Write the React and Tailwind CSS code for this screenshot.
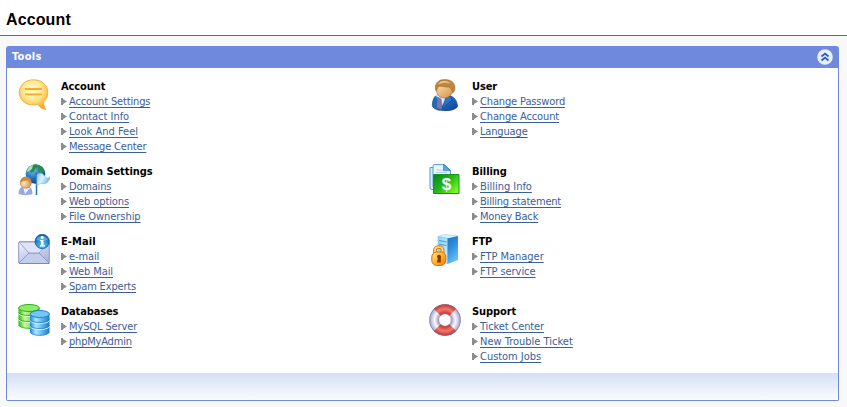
import React from "react";

function AccountIcon() {
  return (
    <svg width="32" height="32" viewBox="0 0 32 32">
      <defs>
        <radialGradient id="bubble" cx=".46" cy=".35" r=".65">
          <stop offset="0" stopColor="#fffcd8" />
          <stop offset=".5" stopColor="#ffe992" />
          <stop offset="1" stopColor="#fda92c" />
        </radialGradient>
      </defs>
      <path d="M15.500 .8C7.300 .8 1.300 6.200 1.300 13.500S7.300 26 15.500 26c1.700 0 3-.2 4.300-.6 1.500 2.600 4.500 4.700 8.100 5-1.700-2-2.500-4.600-2.300-7.500 2.700-2.400 4.200-5.600 4.200-9.400C29.800 6.200 23.700.8 15.500.8Z" fill="url(#bubble)" stroke="#f3ae48" />
      <path d="M7 10h17M7 15.500h17" stroke="#fda92b" strokeWidth="2" />
      <path d="M7 11.500h17M7 17h17" stroke="#fff3a8" strokeWidth="1" />
    </svg>
  );
}

function DomainIcon() {
  return (
    <svg width="32" height="32" viewBox="0 0 32 32">
      <defs>
        <radialGradient id="globe" cx=".35" cy=".3" r=".8">
          <stop offset="0" stopColor="#75bbe8" />
          <stop offset=".5" stopColor="#2775c4" />
          <stop offset="1" stopColor="#092d80" />
        </radialGradient>
        <linearGradient id="flag" x2="1" y2=".5">
          <stop offset="0" stopColor="#8dc6ee" />
          <stop offset=".5" stopColor="#dcf3ff" />
          <stop offset="1" stopColor="#68b5e6" />
        </linearGradient>
        <radialGradient id="face" cx=".35" cy=".55" r=".65">
          <stop offset="0" stopColor="#ffe6bb" />
          <stop offset="1" stopColor="#cf9149" />
        </radialGradient>
      </defs>
      <circle cx="17.500" cy="10" r="9.800" fill="url(#globe)" />
      <path d="M11 4c2-2.500 5-3.700 8-3.700l1 2.500-3 2-1 3-3 1Zm9-3 4 2 3 5-4 1-3-4Z" fill="#258f4a" />
      <path d="M9 8c0-3 3-6 6-7l-1 4-3 2Z" fill="#a9e6b5" />
      <path d="M18.500 9v22" stroke="#2b70a8" strokeWidth="1.500" />
      <path d="M19 10.500c4-2.500 6-1 8 2 1.500 2 3 2 5 .5-1 4.500-3 6.500-6 6.500-3 .5-4-1-7 2.500Z" fill="url(#flag)" stroke="#80bce2" strokeWidth=".7" />
      <path d="M.5 30c0-5 2.500-8 7-8s7 2 7 8c-4 1.500-10 1.500-14 0Z" fill="#9ba8dc" />
      <path d="m5 23 2 7 5-6Z" fill="#eaf0ff" />
      <circle cx="7.800" cy="18.800" r="5.500" fill="url(#face)" stroke="#bd803f" strokeWidth=".6" />
      <path d="M2.200 18.500c0-4 3-6 6-5.800 3 .2 5.700 2.500 5.200 6.800-2-1-2-3-4-3-3 0-4 .3-7.200 2Z" fill="#c78b46" />
    </svg>
  );
}

function MailIcon() {
  return (
    <svg width="32" height="32" viewBox="0 0 32 32">
      <defs>
        <linearGradient id="envelope" x2=".7" y2="1">
          <stop offset="0" stopColor="#f3f5ff" />
          <stop offset="1" stopColor="#a8b5df" />
        </linearGradient>
        <radialGradient id="info" cx=".5" cy=".75" r=".7">
          <stop offset="0" stopColor="#55ccf5" />
          <stop offset="1" stopColor="#0960ae" />
        </radialGradient>
      </defs>
      <rect x=".7" y="7.700" width="30.600" height="21.600" rx="1" fill="url(#envelope)" stroke="#8f97c4" />
      <path d="m1 29 10-10h10l10 10" fill="#c3cdec" stroke="#8791b8" strokeWidth=".8" />
      <path d="m1 8 10 11h10L31 8Z" fill="#dce3fa" stroke="#8f97bd" strokeWidth=".8" />
      <path d="M1 29.500h30.500" stroke="#7d88b5" />
      <circle cx="24.200" cy="7.500" r="7.200" fill="url(#info)" stroke="#07549a" strokeWidth=".7" />
      <path d="M18.500 5.500c2-5 9-5 11 0-3 2-7 2-11 0Z" fill="#78bee7" opacity=".65" />
      <path d="M22 6h3.500v5H27v1.500h-5V11h1V7.300h-1Z" fill="white" />
      <circle cx="24.200" cy="3.500" r="1.500" fill="white" />
    </svg>
  );
}

function DatabaseIcon() {
  return (
    <svg width="32" height="32" viewBox="0 0 32 32">
      <defs>
        <linearGradient id="greenDisk">
          <stop offset="0" stopColor="#32b51b" />
          <stop offset=".3" stopColor="#c3ff95" />
          <stop offset="1" stopColor="#26aa18" />
        </linearGradient>
        <linearGradient id="blueDisk">
          <stop offset="0" stopColor="#1b86dc" />
          <stop offset=".3" stopColor="#a9e8ff" />
          <stop offset="1" stopColor="#137bd2" />
        </linearGradient>
      </defs>
      <path d="M.5 4v17c1 4.500 20 4.500 21 0V4" fill="url(#greenDisk)" />
      <path d="M.5 9.500c2 4 19 4 21 0M.5 15.500c2 4 19 4 21 0" fill="none" stroke="#e5ffd9" strokeWidth="1" />
      <path d="M.5 8.500c2 4 19 4 21 0M.5 14.500c2 4 19 4 21 0M.5 21c2 4.500 19 4.500 21 0" fill="none" stroke="#28a51d" strokeWidth=".8" />
      <ellipse cx="11" cy="4" rx="10.400" ry="3.500" fill="#8fec68" stroke="#2fb020" />
      <path d="M12 10v18c1 4.500 18.500 4.500 19.500 0V10" fill="url(#blueDisk)" />
      <path d="M12 16.500c2 4 17.500 4 19.500 0M12 22.500c2 4 17.500 4 19.500 0" fill="none" stroke="#d7f5ff" strokeWidth="1" />
      <path d="M12 15.500c2 4 17.500 4 19.500 0M12 21.500c2 4 17.500 4 19.500 0M12 28c2 4.500 17.500 4.500 19.500 0" fill="none" stroke="#237fc7" strokeWidth=".8" />
      <ellipse cx="21.800" cy="10" rx="9.600" ry="3.500" fill="#75c6f4" stroke="#1d85d4" />
    </svg>
  );
}

function UserIcon() {
  return (
    <svg width="32" height="32" viewBox="0 0 32 32">
      <defs>
        <linearGradient id="suit" x2="1" y2="1">
          <stop offset="0" stopColor="#0a70cf" />
          <stop offset=".5" stopColor="#2068bd" />
          <stop offset="1" stopColor="#163c88" />
        </linearGradient>
        <linearGradient id="skin" x2="1" y2="1">
          <stop offset="0" stopColor="#ffe1ad" />
          <stop offset="1" stopColor="#d08d49" />
        </linearGradient>
      </defs>
      <path d="M3.300 27c0-6 2-10.500 6-11.300l11 1c5 1 8 5 8.300 11-4 5.500-22 6-25.300-.7Z" fill="url(#suit)" stroke="#15518e" strokeWidth=".7" />
      <path d="m7 16 4 14 7-11-5-3Z" fill="#dfe5fb" />
      <path d="m8.500 18 3.500 2 1.500 10c-2 1-5 0-6-2Z" fill="#777aa9" stroke="#565987" strokeWidth=".5" />
      <path d="m17 18 5-1 1 4-10 9Z" fill="#2b74c7" stroke="#0b4595" strokeWidth=".6" />
      <path d="M7 6c4-2 15-2 18 2-.5 6-4.500 11-9.500 11C10 19 7.200 15 7 9Z" fill="url(#skin)" stroke="#a3652a" strokeWidth=".6" />
      <path d="M6.400 8.500C6.500 3.500 10 .4 15.500 .4c6.500 0 10.500 3.500 10.500 8.100 0 3-1 4.500-2.500 5.500-.5-3-1.500-5-4-6-4 .5-8-2-10.500 0L7.500 12c-.9-1-1.100-2.500-1.100-3.500Z" fill="#bd8640" stroke="#9a6229" strokeWidth=".5" />
      <path d="M9 5.500c2-4.500 9-4.500 13-1-4-1-9-1-13 1Z" fill="#efca86" />
    </svg>
  );
}

function BillingIcon() {
  return (
    <svg width="32" height="32" viewBox="0 0 32 32">
      <defs>
        <linearGradient id="money" x2="1" y2=".8">
          <stop offset="0" stopColor="#078416" />
          <stop offset=".5" stopColor="#22b51c" />
          <stop offset="1" stopColor="#7cff25" />
        </linearGradient>
      </defs>
      <path d="M1 3.500h13v22H3a2 2 0 0 1-2-2Z" fill="#d9efff" stroke="#5599d8" />
      <path d="M5 .6h10.500l6 6V24H6a2 2 0 0 1-2-2V2.600a2 2 0 0 1 1-2Z" fill="#e7f6ff" stroke="#5b9ad0" />
      <path d="M14.500 .6v6h7Z" fill="#5da3de" stroke="#3d7db9" strokeWidth=".7" />
      <path d="M7 6h7M7 8.500h11" stroke="#b2d4ef" />
      <path d="M4.500 10.500h25.500v19H4.500Z" fill="url(#money)" stroke="#15961b" />
      <text x="17.500" y="26" textAnchor="middle" className="fill-white font-['Liberation_Sans'] text-[17px] font-bold">$</text>
    </svg>
  );
}

function FtpIcon() {
  return (
    <svg width="32" height="32" viewBox="0 0 32 32">
      <defs>
        <linearGradient id="server" y2=".5">
          <stop offset="0" stopColor="#8ed4ff" />
          <stop offset="1" stopColor="#bde7ff" />
        </linearGradient>
        <linearGradient id="serverSide" x2=".4" y2="1">
          <stop offset="0" stopColor="#1672c6" />
          <stop offset=".5" stopColor="#328fdc" />
          <stop offset="1" stopColor="#61c0f7" />
        </linearGradient>
        <linearGradient id="lock" x2="1" y2="1">
          <stop offset="0" stopColor="#fff19a" />
          <stop offset=".5" stopColor="#ffb42e" />
          <stop offset="1" stopColor="#ee7900" />
        </linearGradient>
      </defs>
      <path d="m9 2.500 7-2.200 13 1.700-10 3Z" fill="#d6f1ff" stroke="#a7d4ef" strokeWidth=".6" />
      <path d="m9 2.500 10 2v25L9 27Z" fill="url(#server)" stroke="#76bce9" strokeWidth=".6" />
      <path d="m18.500 4.500 10.500-2.500V26l-10.500 4Z" fill="url(#serverSide)" />
      <path d="m10 6.500 7.500 1.500M10 10l7.500 1.500" stroke="#429ddd" strokeWidth="1.200" />
      <path d="M6 20v-3.500c0-4.500 7.500-4.500 7.500 0V20" fill="none" stroke="#d87400" strokeWidth="3.800" />
      <path d="M6 20v-3.500c0-4.500 7.500-4.500 7.500 0V20" fill="none" stroke="#ffdc86" strokeWidth="1.900" />
      <rect x="2.800" y="18" width="14" height="13.500" rx="5" fill="url(#lock)" stroke="#dc7000" />
      <circle cx="10" cy="22.800" r="2" fill="#8e3500" />
      <path d="m9.500 22.500-1.700 6h4v-6Z" fill="#8e3500" />
    </svg>
  );
}

function SupportIcon() {
  return (
    <svg width="32" height="32" viewBox="0 0 32 32">
      <defs>
        <radialGradient id="ring" gradientUnits="userSpaceOnUse" cx="16" cy="16" r="16">
          <stop offset=".35" stopColor="#858bbd" />
          <stop offset=".65" stopColor="#fafaff" />
          <stop offset="1" stopColor="#959cc9" />
        </radialGradient>
        <radialGradient id="redBand" gradientUnits="userSpaceOnUse" cx="16" cy="16" r="16">
          <stop offset=".35" stopColor="#b02e28" />
          <stop offset=".68" stopColor="#f9766a" />
          <stop offset="1" stopColor="#b53535" />
        </radialGradient>
      </defs>
      <circle cx="16" cy="16" r="11" fill="none" stroke="url(#ring)" strokeWidth="9.500" />
      <path d="M4.900 4.900A15.800 15.800 0 0 1 27.100 4.900L20.400 11.700A6.200 6.200 0 0 0 11.600 11.700ZM4.900 27.100A15.800 15.800 0 0 0 27.100 27.100L20.400 20.300A6.200 6.200 0 0 1 11.600 20.300Z" fill="url(#redBand)" />
      <circle cx="16" cy="16" r="15.500" fill="none" stroke="#8e6289" strokeWidth=".5" />
      <circle cx="16" cy="16" r="6.200" fill="none" stroke="#b57e93" strokeWidth=".5" />
    </svg>
  );
}

const columns = [
  [
    {
      title: "Account", spacing: "tracking-[-0.1px]", Icon: AccountIcon,
      links: [
        ["Account Settings", "tracking-[-0.15px]"],
        ["Contact Info", "tracking-[-0.02px]"],
        ["Look And Feel", "tracking-[0.02px]"],
        ["Message Center", "tracking-[-0.18px]"],
      ],
    },
    {
      title: "Domain Settings", spacing: "tracking-[-0.07px]", Icon: DomainIcon,
      links: [
        ["Domains", "tracking-[-0.2px]"],
        ["Web options", "tracking-[-0.1px]"],
        ["File Ownership", "tracking-[-0.06px]"],
      ],
    },
    {
      title: "E-Mail", spacing: "tracking-[0.1px]", Icon: MailIcon,
      links: [
        ["e-mail", "tracking-[-0.1px]"],
        ["Web Mail", "tracking-[-0.1px]"],
        ["Spam Experts", "tracking-[-0.16px]"],
      ],
    },
    {
      title: "Databases", spacing: "tracking-[-0.14px]", Icon: DatabaseIcon,
      links: [
        ["MySQL Server", "tracking-[-0.12px]"],
        ["phpMyAdmin", "tracking-[-0.2px]"],
      ],
    },
  ],
  [
    {
      title: "User", spacing: "tracking-[-0.1px]", Icon: UserIcon,
      links: [
        ["Change Password", "tracking-[-0.14px]"],
        ["Change Account", "tracking-[-0.14px]"],
        ["Language", "tracking-[-0.16px]"],
      ],
    },
    {
      title: "Billing", spacing: "tracking-[-0.05px]", Icon: BillingIcon,
      links: [
        ["Billing Info", "tracking-[-0.03px]"],
        ["Billing statement", "tracking-[-0.2px]"],
        ["Money Back", "tracking-[-0.18px]"],
      ],
    },
    {
      title: "FTP", spacing: "tracking-[-0.2px]", Icon: FtpIcon,
      links: [
        ["FTP Manager", "tracking-[-0.03px]"],
        ["FTP service", "tracking-[-0.05px]"],
      ],
    },
    {
      title: "Support", spacing: "tracking-[-0.1px]", Icon: SupportIcon,
      links: [
        ["Ticket Center", "tracking-[-0.13px]"],
        ["New Trouble Ticket", "tracking-[0px]"],
        ["Custom Jobs", "tracking-[-0.03px]"],
      ],
    },
  ],
];

function ToolGroup({ title, spacing, Icon, links }) {
  return (
    <section className="flex items-start gap-[11px]">
      <div className="h-8 w-8 shrink-0"><Icon /></div>
      <div>
        <h3 className={`h-[15px] font-bold text-black ${spacing}`}>{title}</h3>
        <ul>
          {links.map(([link, tracking]) => (
            <li key={link} className="flex h-[15px] items-center">
              <svg className="mr-[2px] shrink-0" width="6" height="7" viewBox="0 0 6 7">
                <path d="M0 0h2v1l4 2.500L2 6v1H0Z" fill="#8c8c8c" />
              </svg>
              <a href="#" className={`whitespace-nowrap text-[#3a6098] underline decoration-1 underline-offset-[2px] ${tracking}`}>{link}</a>
            </li>
          ))}
        </ul>
      </div>
    </section>
  );
}

export default function App() {
  return (
    <div className="h-[407px] w-[847px] overflow-hidden bg-[#f8f8f8] font-['DejaVu_Sans_Condensed','DejaVu_Sans',sans-serif] text-[11px] leading-[15px]">
      <header className="h-9 border-b border-[#776761] bg-white pl-[6px] pt-[9px]">
        <h1 className="font-['Liberation_Sans',sans-serif] text-base font-bold leading-[21px] tracking-[0.12px] text-black">Account</h1>
      </header>
      <main className="ml-[6px] mt-[10px] w-[833px]">
        <div className="flex h-[22px] items-center justify-between rounded-t-[3px] bg-[#6f8add] pl-[6px] pr-[6px]">
          <h2 className="pb-[2px] font-bold tracking-[0.3px] text-white">Tools</h2>
          <svg width="16" height="16" viewBox="0 0 16 16">
            <circle cx="8" cy="8" r="7.800" fill="#e8effc" />
            <path d="m4.500 7.500 3.500-3 3.500 3m-7 4 3.500-3 3.500 3" fill="none" stroke="#245bc3" strokeWidth="1.700" />
          </svg>
        </div>
        <div className="flex h-[333px] flex-col rounded-b-[2px] border border-t-0 border-[#6f8add] bg-white">
          <div className="grid h-[305px] grid-cols-[411px_1fr] pl-[11px] pt-[11px]">
            {columns.map((groups, i) => (
              <div key={i} className="grid grid-rows-[75px_60px_60px_60px] content-start gap-y-[10px]">
                {groups.map((group) => <ToolGroup key={group.title} {...group} />)}
              </div>
            ))}
          </div>
          <div className="flex-1 bg-linear-to-b from-[#d5dff5] to-[#fafcff]" />
        </div>
      </main>
    </div>
  );
}
